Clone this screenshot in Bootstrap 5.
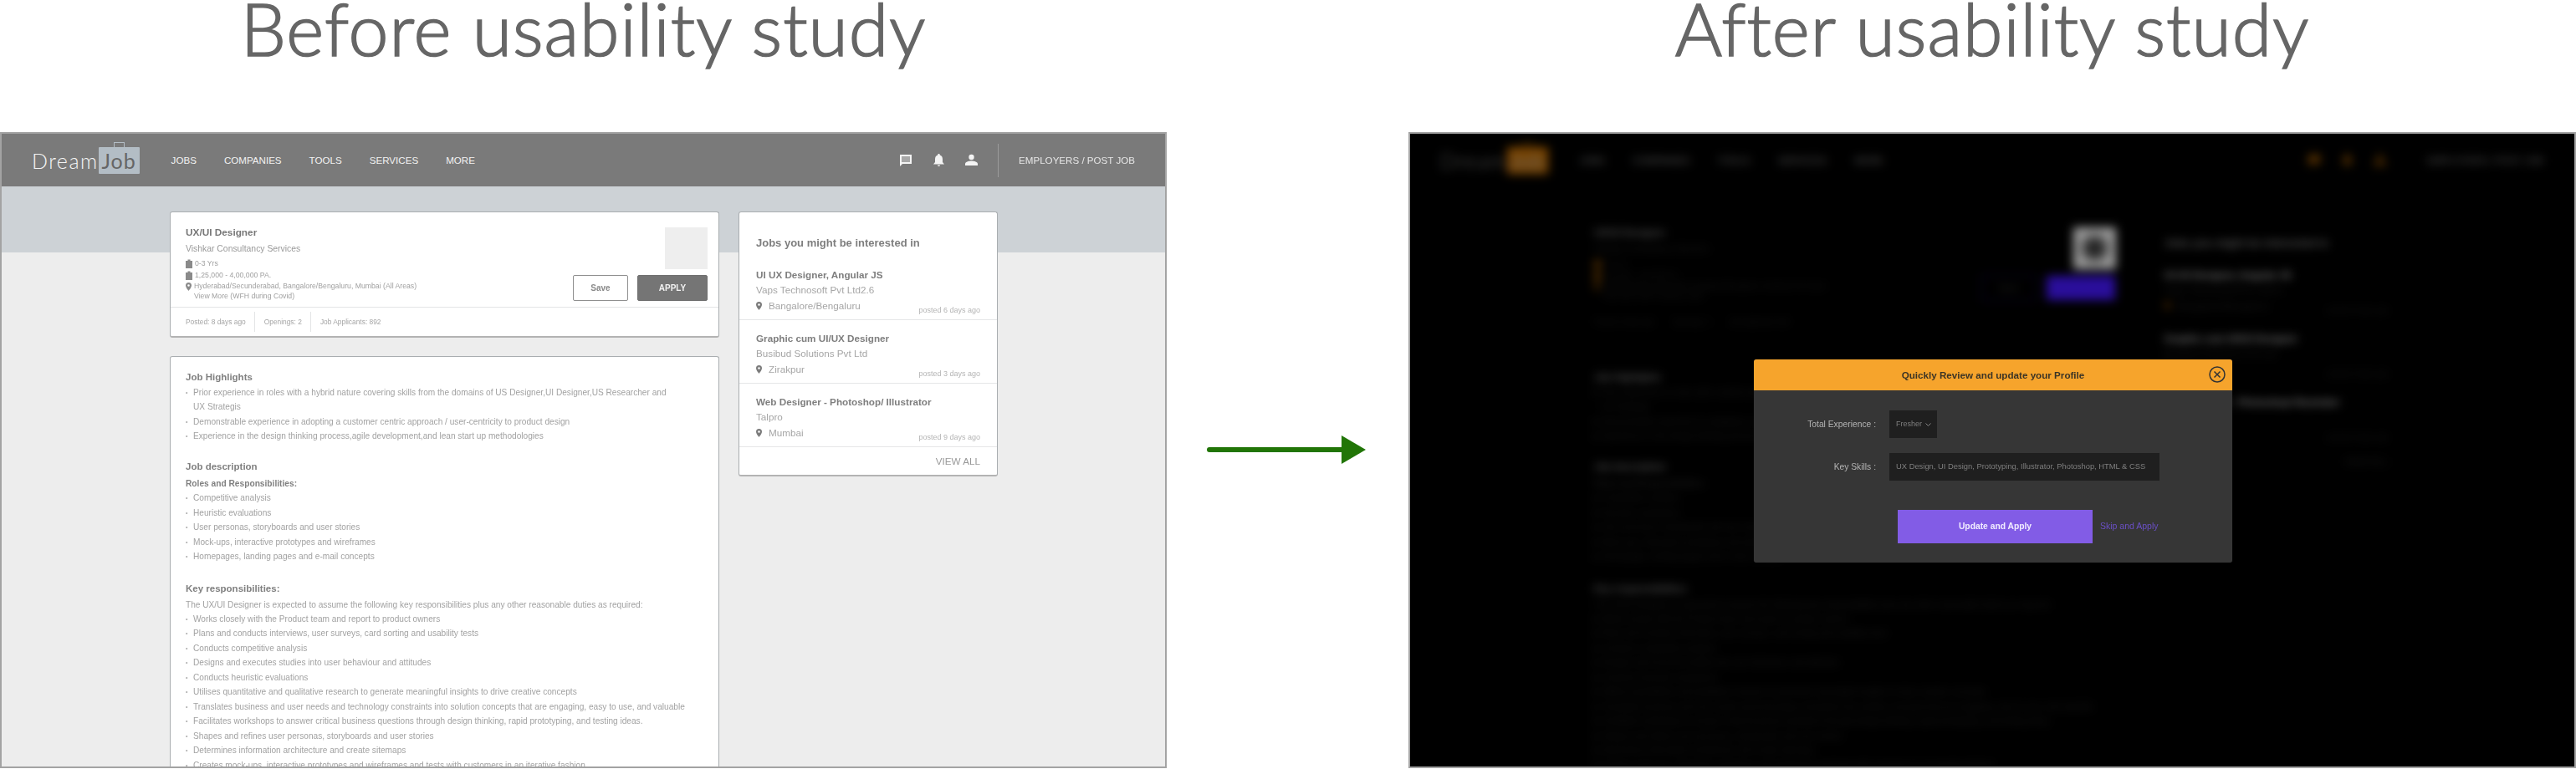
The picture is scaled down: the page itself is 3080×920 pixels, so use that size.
<!DOCTYPE html>
<html lang="en">
<head>
<meta charset="UTF-8">
<title>Before and after usability study</title>
<link href="https://cdn.jsdelivr.net/npm/bootstrap@5.3.2/dist/css/bootstrap.min.css" rel="stylesheet">
<style>
html,body{width:3080px;height:920px;overflow:hidden;background:#fff}
body{font-family:"Liberation Sans",Arial,sans-serif;color:#8f8f8f}
.board{display:grid;grid-template-columns:1395px 289px 1396px;grid-template-rows:158px 761px;width:3080px;height:919px}
.study-title{font-family:Lato,sans-serif;font-weight:300;font-size:86px;line-height:64px;padding-top:2px;color:#666;margin:0;text-align:center;letter-spacing:1px;-webkit-text-stroke:1.7px #666}
.arrow-cell{display:flex;justify-content:center;padding:363px 3px 0 0}
.frame{position:relative;border:2px solid #a3a3a3;background:#ededed;overflow:hidden;height:761px}
.frame-inner{width:1391px;height:757px;filter:blur(.55px)}
.top-bar{height:63px;background:#7a7a7a;padding:0 36px;color:#f2f2f2;font-size:11.6px}
.logo-word{font-family:Lato,sans-serif;font-size:25px;font-weight:300;letter-spacing:1.5px;color:#f4f4f4;line-height:32px}
.logo-bag{position:relative;display:inline-block;background:#b3bdc5;color:#666;font-family:Lato,sans-serif;font-size:25px;letter-spacing:1px;height:32px;line-height:32px;width:49px;text-align:center;border-radius:1px}
.logo-bag::before{content:"";position:absolute;left:18px;top:-6px;width:13px;height:6px;border:1px solid #b3bdc5;border-bottom:0}
.menu-links{gap:33px;margin-left:38px}
.emp-link{border-left:1px solid #9c9c9c;height:40px;line-height:40px;padding-left:24px;margin-left:24px;color:#e6e6e6}
.top-icons{gap:24px}
.hero-band{height:79px;background:#cdd2d6}
.col-wrap{margin-top:-49px;margin-left:201px;gap:22px;width:990px}
.left-col{width:657px;gap:22px}
.right-col{width:310px;margin-left:1px}
.sheet{border:1px solid #a9adb0;border-bottom:2px solid #b3b3b3;border-radius:3px;background:#fff}
.job-top{height:113px;padding:15px 13px 0 18px}
.job-name{font-size:11.8px;font-weight:700;color:#777;line-height:18px}
.job-co{font-size:10.4px;color:#9a9a9a;margin-top:4px;line-height:14px}
.job-meta{font-size:8.7px;line-height:13px;color:#a0a0a0}
.job-meta svg{flex:none;margin-right:3px}
.meta-first{margin-top:4px}
.meta-second{margin-top:1px}
.meta-more{margin-left:2px;margin-top:-1px}
.logo-ph{width:51px;height:50px;background:#eee;margin-top:3px}
.btn-row{gap:11px;margin-top:7px}
.save-btn,.apply-btn{height:31px;border-radius:2px;font-size:10px;font-weight:700;padding:0;line-height:29px}
.save-btn{width:66px;border:1px solid #8f8f8f;background:#fff;color:#8a8a8a}
.apply-btn{width:84px;border:1px solid #6f6f6f;background:#757575;color:#f2f2f2}
.job-foot{height:35px;border-top:1px solid #e3e5e6;padding:0 18px;font-size:8.4px;color:#a5a5a5}
.job-foot span{line-height:24px}
.job-foot span+span{border-left:1px solid #e3e5e6;margin-left:10px;padding-left:11px}
.desc-sheet{height:520px;padding:15px 18px;font-size:10.15px;line-height:17.45px;color:#a2a2a2}
.desc-h{font-size:11.5px;font-weight:700;color:#808080;line-height:18px;margin:0 0 1px}
.desc-h.next{margin-top:18px}
.desc-h.key{margin-top:20px;margin-bottom:2px}
.desc-sub{font-size:10.2px;font-weight:700;color:#808080;line-height:17.45px;margin:3px 0 0}
.desc-list{list-style:none;margin:0;padding:0 0 0 9px}
.desc-list li{position:relative;white-space:nowrap}
.desc-list li.wrap{white-space:normal;width:572px}
.desc-list li::before{content:"•";position:absolute;left:-9px;font-size:7px;color:#aaa}
.side-h{font-size:13px;font-weight:700;color:#7e7e7e;padding:28px 20px 0;line-height:18px;margin:0}
.side-item{border-bottom:1px solid #e5e6e7;padding:0 20px;height:76px;font-size:11.7px;line-height:18.3px;color:#a6a6a6;position:relative}
.side-item b{display:block;color:#7e7e7e;padding-top:13px}
.side-item.first{height:83px;padding-top:20px}
.side-item.first b{padding-top:0}
.side-item svg{margin-right:8px;vertical-align:-1px}
.side-when{position:absolute;right:20px;bottom:5px;font-size:9px;line-height:12px;color:#b4b4b4}
.view-all{font-size:11.7px;color:#999;text-align:right;padding:7px 20px 0;height:33px;line-height:19px}
.dark-copy{position:absolute;left:0;top:0;filter:blur(6px)}
.frame.after{background:#000}
.dark-copy .top-bar,.dark-copy .hero-band,.dark-copy .sheet,.dark-copy .save-btn{background:#000;border-color:#000}
.dark-copy,.dark-copy *{color:#1c1c1c;border-color:#000}
.dark-copy .job-foot span+span{border-color:#000}
.dark-copy .top-bar span,.dark-copy .emp-link{color:#5a5a5a}
.dark-copy .job-name,.dark-copy .desc-h,.dark-copy .side-h{color:#555}
.dark-copy .logo-word{color:#666}
.dark-copy .logo-bag{background:#7a4400;color:#000}
.dark-copy .logo-bag::before{border-color:#7a4400}
.dark-copy .apply-btn{background:#2a0e9a;color:#2a0e9a}
.dark-copy .save-btn{border-color:#12083f}
.dark-copy .logo-ph{background:radial-gradient(#222 22%,#9a9a9a 58%)}
.dark-copy svg{fill:#5a3200}
.dark-copy .top-icons rect{fill:#5a3200}
.dark-copy .emp-link{border-color:#000}
.modal-box{position:absolute;left:411px;top:270px;width:572px;height:243px;background:#363636;border-radius:3px;box-shadow:0 0 1px #222;filter:blur(.35px);z-index:2}
.modal-head{height:37px;background:#f6a42c;border-radius:3px 3px 0 0;font-size:11.65px;font-weight:700;color:#3b3426}
.modal-close{position:absolute;right:8px;top:8px;width:20px;height:20px}
.field-lbl{width:146px;text-align:right;font-size:10.3px;color:#b4b4b4;margin-right:16px}
.field-row{height:33px}
.field-row.one{margin-top:24px}
.field-row.two{margin-top:18px}
.sel-box{width:57px;height:33px;background:#1f1f1f;color:#7f7f7f;font-size:9px;padding-left:8px}
.skills-box{width:323px;height:33px;background:#1f1f1f;color:#7f7f7f;font-size:9.4px;padding-left:8px;white-space:nowrap}
.action-row{margin-top:35px;padding-left:172px}
.update-btn{width:233px;height:40px;background:#825ce6;border:0;border-radius:0;color:#f1ecff;font-size:10.3px;font-weight:700;padding:0}
.skip-link{color:#6a4fc4;font-size:10.5px;margin-left:9px;text-decoration:none}
</style>
</head>
<body>
<div class="board">
  <h1 class="study-title">Before usability study</h1>
  <div></div>
  <h1 class="study-title">After usability study</h1>

  <div class="frame" id="before">
    <div class="frame-inner" id="page">
      <div class="top-bar d-flex align-items-center">
        <div class="d-flex align-items-center">
          <span class="logo-word">Dream</span><span class="logo-bag">Job</span>
        </div>
        <div class="menu-links d-flex">
          <span>JOBS</span><span>COMPANIES</span><span>TOOLS</span><span>SERVICES</span><span>MORE</span>
        </div>
        <div class="top-icons d-flex align-items-center ms-auto">
          <svg width="16" height="16" viewBox="0 0 16 16" fill="#f4f4f4"><path d="M1 1h14v11H4l-3 3z"/><rect x="3" y="3" width="10" height="7" fill="#a8a8a8"/></svg>
          <svg width="15" height="16" viewBox="0 0 15 16" fill="#f4f4f4"><path d="M7.500 0a1.200 1.200 0 0 1 1.200 1.500C11 2.200 12 4 12 6.500V10l2 2.500H1L3 10V6.500C3 4 4 2.200 6.300 1.500A1.200 1.200 0 0 1 7.500 0zM6 13.500h3a1.500 1.500 0 0 1-3 0z"/></svg>
          <svg width="15" height="15" viewBox="0 0 15 15" fill="#f4f4f4"><circle cx="7.500" cy="4" r="3.200"/><path d="M0 14v-2c0-2 4-3.500 7.500-3.500S15 10 15 12v2z"/></svg>
        </div>
        <div class="emp-link">EMPLOYERS / POST JOB</div>
      </div>
      <div class="hero-band"></div>
      <div class="col-wrap d-flex align-items-start">
        <div class="left-col d-flex flex-column">
          <div class="sheet">
            <div class="job-top d-flex justify-content-between">
              <div>
                <div class="job-name">UX/UI Designer</div>
                <div class="job-co">Vishkar Consultancy Services</div>
                <div class="job-meta meta-first d-flex align-items-center"><svg width="8" height="11" viewBox="0 0 8 11" fill="#8a8a8a"><path d="M2.500 2V.5h3V2H8v9H0V2z"/></svg>0-3 Yrs</div>
                <div class="job-meta meta-second d-flex align-items-center"><svg width="8" height="11" viewBox="0 0 8 11" fill="#8a8a8a"><path d="M2.500 2V.5h3V2H8v9H0V2z"/></svg>1,25,000 - 4,00,000 PA.</div>
                <div class="job-meta d-flex align-items-center"><svg width="7" height="10" viewBox="0 0 7 10" fill="#8a8a8a"><path d="M3.500 0A3.500 3.500 0 0 1 7 3.500C7 6 3.500 10 3.500 10S0 6 0 3.500A3.500 3.500 0 0 1 3.500 0zm0 2.200a1.300 1.300 0 1 0 0 2.600 1.300 1.300 0 0 0 0-2.600z" fill-rule="evenodd"/></svg>Hyderabad/Secunderabad, Bangalore/Bengaluru, Mumbai (All Areas)</div>
                <div class="job-meta meta-more ps-2">View More (WFH during Covid)</div>
              </div>
              <div class="d-flex flex-column align-items-end">
                <div class="logo-ph"></div>
                <div class="btn-row d-flex">
                  <button class="save-btn">Save</button>
                  <button class="apply-btn">APPLY</button>
                </div>
              </div>
            </div>
            <div class="job-foot d-flex align-items-center">
              <span>Posted: 8 days ago</span><span>Openings: 2</span><span>Job Applicants: 892</span>
            </div>
          </div>
          <div class="sheet desc-sheet">
            <h2 class="desc-h">Job Highlights</h2>
            <ul class="desc-list">
              <li class="wrap">Prior experience in roles with a hybrid nature covering skills from the domains of US Designer,UI Designer,US Researcher and UX Strategis</li>
              <li>Demonstrable experience in adopting a customer centric approach / user-centricity to product design</li>
              <li>Experience in the design thinking process,agile development,and lean start up methodologies</li>
            </ul>
            <h2 class="desc-h next">Job description</h2>
            <div class="desc-sub">Roles and Responsibilities:</div>
            <ul class="desc-list">
              <li>Competitive analysis</li>
              <li>Heuristic evaluations</li>
              <li>User personas, storyboards and user stories</li>
              <li>Mock-ups, interactive prototypes and wireframes</li>
              <li>Homepages, landing pages and e-mail concepts</li>
            </ul>
            <h2 class="desc-h key">Key responsibilities:</h2>
            <div>The UX/UI Designer is expected to assume the following key responsibilities plus any other reasonable duties as required:</div>
            <ul class="desc-list">
              <li>Works closely with the Product team and report to product owners</li>
              <li>Plans and conducts interviews, user surveys, card sorting and usability tests</li>
              <li>Conducts competitive analysis</li>
              <li>Designs and executes studies into user behaviour and attitudes</li>
              <li>Conducts heuristic evaluations</li>
              <li>Utilises quantitative and qualitative research to generate meaningful insights to drive creative concepts</li>
              <li>Translates business and user needs and technology constraints into solution concepts that are engaging, easy to use, and valuable</li>
              <li>Facilitates workshops to answer critical business questions through design thinking, rapid prototyping, and testing ideas.</li>
              <li>Shapes and refines user personas, storyboards and user stories</li>
              <li>Determines information architecture and create sitemaps</li>
              <li>Creates mock-ups, interactive prototypes and wireframes and tests with customers in an iterative fashion</li>
            </ul>
          </div>
        </div>
        <div class="right-col sheet">
          <h2 class="side-h">Jobs you might be interested in</h2>
          <div class="side-item first"><b>UI UX Designer, Angular JS</b>Vaps Technosoft Pvt Ltd2.6<br><svg width="7" height="10" viewBox="0 0 7 10" fill="#7c7c7c"><path d="M3.500 0A3.500 3.500 0 0 1 7 3.500C7 6 3.500 10 3.500 10S0 6 0 3.500A3.500 3.500 0 0 1 3.500 0zm0 2.200a1.300 1.300 0 1 0 0 2.600 1.300 1.300 0 0 0 0-2.600z" fill-rule="evenodd"/></svg>Bangalore/Bengaluru<span class="side-when">posted 6 days ago</span></div>
          <div class="side-item"><b>Graphic cum UI/UX Designer</b>Busibud Solutions Pvt Ltd<br><svg width="7" height="10" viewBox="0 0 7 10" fill="#7c7c7c"><path d="M3.500 0A3.500 3.500 0 0 1 7 3.500C7 6 3.500 10 3.500 10S0 6 0 3.500A3.500 3.500 0 0 1 3.500 0zm0 2.200a1.300 1.300 0 1 0 0 2.600 1.300 1.300 0 0 0 0-2.600z" fill-rule="evenodd"/></svg>Zirakpur<span class="side-when">posted 3 days ago</span></div>
          <div class="side-item"><b>Web Designer - Photoshop/ Illustrator</b>Talpro<br><svg width="7" height="10" viewBox="0 0 7 10" fill="#7c7c7c"><path d="M3.500 0A3.500 3.500 0 0 1 7 3.500C7 6 3.500 10 3.500 10S0 6 0 3.500A3.500 3.500 0 0 1 3.500 0zm0 2.200a1.300 1.300 0 1 0 0 2.600 1.300 1.300 0 0 0 0-2.600z" fill-rule="evenodd"/></svg>Mumbai<span class="side-when">posted 9 days ago</span></div>
          <div class="view-all">VIEW ALL</div>
        </div>
      </div>
    </div>
  </div>

  <div class="arrow-cell">
    <svg width="190" height="34" viewBox="0 0 190 34"><path d="M3 17H165" stroke="#217507" stroke-width="6" stroke-linecap="round"/><path d="M161 0l29 17-29 17z" fill="#217507"/></svg>
  </div>

  <div class="frame after" id="after">
    <div class="modal-box">
      <div class="modal-head d-flex align-items-center justify-content-center">Quickly Review and update your Profile</div>
      <svg class="modal-close" viewBox="0 0 20 20" fill="none" stroke="#333" stroke-width="1.500"><circle cx="10" cy="10" r="9"/><path d="M6.500 6.500l7 7M13.500 6.500l-7 7"/></svg>
      <div class="field-row one d-flex align-items-center">
        <div class="field-lbl">Total Experience :</div>
        <div class="sel-box d-flex align-items-center">Fresher<svg width="7" height="4" viewBox="0 0 7 4" fill="none" stroke="#888" class="ms-1"><path d="M.5.500l3 3 3-3"/></svg></div>
      </div>
      <div class="field-row two d-flex align-items-center">
        <div class="field-lbl">Key Skills :</div>
        <div class="skills-box d-flex align-items-center">UX Design, UI Design, Prototyping, Illustrator, Photoshop, HTML &amp; CSS</div>
      </div>
      <div class="action-row d-flex align-items-center">
        <button class="update-btn">Update and Apply</button>
        <a class="skip-link" href="#">Skip and Apply</a>
      </div>
    </div>
  </div>
</div>
<script>
// right frame is the same page, dimmed behind the modal
const copy=document.getElementById('page').cloneNode(true);
copy.removeAttribute('id');
copy.classList.add('dark-copy');
copy.setAttribute('aria-hidden','true');
document.getElementById('after').prepend(copy);
</script>
<script src="https://cdn.jsdelivr.net/npm/bootstrap@5.3.2/dist/js/bootstrap.bundle.min.js"></script>
</body>
</html>
